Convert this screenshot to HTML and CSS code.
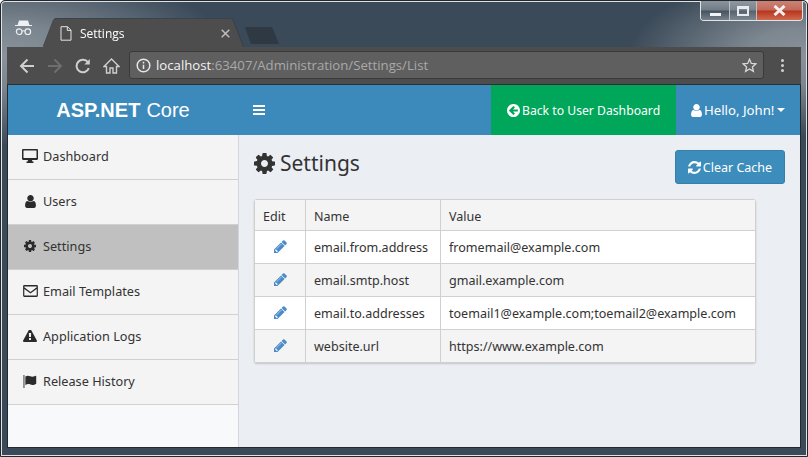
FILE: index.html
```html
<!DOCTYPE html>
<html lang="en">
<head>
<meta charset="utf-8">
<title>Settings</title>
<link rel="stylesheet" href="styles.css">
</head>
<body>
<svg class="defs" aria-hidden="true">
  <symbol id="i-user" viewBox="256 128 1280 1536"><path d="M1536 1399q0 109-62.5 187t-150.5 78h-854q-88 0-150.5-78t-62.5-187q0-85 8.5-160.5t31.5-152 58.5-131 94-89 134.5-34.5q131 128 313 128t313-128q76 0 134.5 34.5t94 89 58.5 131 31.5 152 8.5 160.5zm-256-887q0 159-112.5 271.5t-271.5 112.5-271.5-112.5-112.5-271.5 112.5-271.5 271.5-112.5 271.5 112.5 112.5 271.5z"/></symbol>
  <symbol id="i-cog" viewBox="128 128 1536 1536"><path d="M1152 896q0-106-75-181t-181-75-181 75-75 181 75 181 181 75 181-75 75-181zm512-109v222q0 12-8 23t-20 13l-185 28q-19 54-39 91 35 50 107 138 10 12 10 25t-9 23q-27 37-99 108t-94 71q-12 0-26-9l-138-108q-44 23-91 38-16 136-29 186-7 28-36 28h-222q-14 0-24.5-8.5t-11.5-21.5l-28-184q-49-16-90-37l-141 107q-10 9-25 9-14 0-25-11-126-114-165-168-7-10-7-23 0-12 8-23 15-21 51-66.5t54-70.5q-27-50-41-99l-183-27q-13-2-21-12.5t-8-23.5v-222q0-12 8-23t19-13l186-28q14-46 39-92-40-57-107-138-10-12-10-24 0-10 9-23 26-36 98.5-107.5t94.5-71.5q13 0 26 10l138 107q44-23 91-38 16-136 29-186 7-28 36-28h222q14 0 24.5 8.5t11.5 21.5l28 184q49 16 90 37l142-107q9-9 24-9 13 0 25 10 129 119 165 170 7 8 7 22 0 12-8 23-15 21-51 66.5t-54 70.5q26 50 41 98l183 28q13 2 21 12.5t8 23.5z"/></symbol>
  <symbol id="i-pencil" viewBox="128 128 1536 1536"><path d="M491 1536l91-91-235-235-91 91v107h128v128h107zm523-928q0-22-22-22-10 0-17 7l-542 542q-7 7-7 17 0 22 22 22 10 0 17-7l542-542q7-7 7-17zm-54-192l416 416-832 832h-416v-416zm683 96q0 53-37 90l-166 166-416-416 166-165q36-38 90-38 53 0 91 38l235 234q37 39 37 91z"/></symbol>
  <symbol id="i-refresh" viewBox="128 128 1536 1536"><path d="M1639 1056q0 5-1 7-64 268-268 434.5t-478 166.5q-146 0-282.5-55t-243.5-157l-129 129q-19 19-45 19t-45-19-19-45v-448q0-26 19-45t45-19h448q26 0 45 19t19 45-19 45l-137 137q71 66 161 102t187 36q134 0 250-65t186-179q11-17 53-117 8-23 30-23h192q13 0 22.5 9.5t9.5 22.5zm25-800v448q0 26-19 45t-45 19h-448q-26 0-45-19t-19-45 19-45l138-138q-148-137-349-137-134 0-250 65t-186 179q-11 17-53 117-8 23-30 23h-199q-13 0-22.5-9.5t-9.5-22.5v-7q65-268 270-434.5t480-166.5q146 0 284 55.5t245 156.5l130-129q19-19 45-19t45 19 19 45z"/></symbol>
  <symbol id="i-back" viewBox="128 128 1536 1536"><path d="M1408 960v-128q0-26-19-45t-45-19h-502l189-189q19-19 19-45t-19-45l-91-91q-18-18-45-18t-45 18l-362 362-91 91q-18 18-18 45t18 45l91 91 362 362q18 18 45 18t45-18l91-91q18-18 18-45t-18-45l-189-189h502q26 0 45-19t19-45zm256-64q0 209-103 385.5t-279.5 279.5-385.5 103-385.5-103-279.5-279.5-103-385.5 103-385.5 279.5-279.5 385.5-103 385.5 103 279.5 279.5 103 385.5z"/></symbol>
  <symbol id="i-warn" viewBox="0 128 1792 1536"><path d="M1024 1375v-190q0-14-9.5-23.5t-22.5-9.5h-192q-13 0-22.5 9.5t-9.5 23.5v190q0 14 9.5 23.5t22.5 9.5h192q13 0 22.5-9.5t9.5-23.5zm-2-374l18-459q0-12-10-19-13-11-24-11h-220q-11 0-24 11-10 7-10 21l17 457q0 10 10 16.5t24 6.5h185q14 0 23.5-6.5t10.5-16.5zm-14-934l768 1408q35 63-2 126-17 29-46.5 46t-63.5 17h-1536q-34 0-63.5-17t-46.5-46q-37-63-2-126l768-1408q17-31 47-49t65-18 65 18 47 49z"/></symbol>
  <symbol id="i-desktop" viewBox="0 0 16 14"><path fill-rule="evenodd" d="M1.2 0h13.600c.7 0 1.200.5 1.200 1.200v8.600c0 .7-.5 1.200-1.200 1.200H10l.4 1.600h1.100V14h-7v-1.400h1.100l.4-1.600H1.200C.5 11 0 10.500 0 9.800V1.200C0 .5.500 0 1.200 0zm.3 1.500v7.500h13V1.500z"/></symbol>
  <symbol id="i-mail" viewBox="0 0 16 13"><path fill-rule="evenodd" d="M1.300 0h13.400C15.400 0 16 .6 16 1.300v10.400c0 .7-.6 1.300-1.300 1.300H1.300C.6 13 0 12.400 0 11.700V1.300C0 .6.600 0 1.300 0zM1.300 1.500v1l6.700 5 6.700-5v-1zm0 2.700v7.300h13.400V4.200L8 9.200z"/></symbol>
  <symbol id="i-flag" viewBox="0 0 14 14"><path d="M0 0h1v14H0zM2 1.500c2-1.200 3.800-.8 5.200-.2 1.500.6 3 .7 5.300-.3.800-.3 1.200 0 1.200.6v7.800c-2.500 1.600-4.500 1.500-6.300.8-2-.7-3.300-.6-5.400.5z"/></symbol>
</svg>

<div class="window">
  <div class="titlebar">
    <div class="incognito">
      <svg width="17" height="17" viewBox="0 0 17 17"><path class="ic-fill" d="M4 1.500h9l1.400 4.500H17v1H0V6h2.600z"/><circle class="ic-line" cx="4.200" cy="12.700" r="2.800"/><circle class="ic-line" cx="12.800" cy="12.700" r="2.800"/><path class="ic-line" d="M7 12.200c1-.6 2-.6 3 0"/></svg>
    </div>
    <div class="tab-wrap">
      <div class="tab">
        <svg class="tab-page" width="12" height="15" viewBox="0 0 12 15"><path d="M1 .7h6.500L11 4.200v10H1zM7.300 .7v3.700H11"/></svg>
        <span class="tab-title">Settings</span>
        <svg class="tab-close" width="9" height="9" viewBox="0 0 9 9"><path d="M.7.700l7.600 7.600M8.300.7L.7 8.300"/></svg>
      </div>
    </div>
    <div class="newtab"></div>
    <div class="controls">
      <div class="ctl ctl-min"><span class="min-glyph"></span></div>
      <div class="ctl ctl-max"><span class="max-glyph"></span></div>
      <div class="ctl ctl-close"><svg width="15" height="11" viewBox="0 0 15 11"><path d="M2.500 1l10 9M12.500 1l-10 9"/></svg></div>
    </div>
  </div>

  <div class="toolbar">
    <div class="navs">
      <svg class="nav" width="16" height="16" viewBox="0 0 16 16"><path d="M15 8H2.500M8.500 1.500L2 8l6.500 6.500"/></svg>
      <svg class="nav nav-off" width="16" height="16" viewBox="0 0 16 16"><path d="M1 8h12.500M7.500 1.500L14 8l-6.500 6.500"/></svg>
      <svg class="nav" width="16" height="16" viewBox="0 0 16 16"><path d="M13.800 10.200A6.300 6.300 0 1 1 13 4.300"/><path class="nav-fill" d="M14.800 1v5.500H9.300z"/></svg>
      <svg class="nav nav-home" width="17" height="16" viewBox="0 0 17 16"><path d="M1 8.500L8.500 1 16 8.500h-2.500V15H10v-5H7v5H3.500V8.500z"/></svg>
    </div>
    <div class="omnibox">
      <svg class="info" width="15" height="15" viewBox="0 0 15 15"><circle cx="7.500" cy="7.500" r="6.300"/><path d="M7.500 6.700v4.300M7.500 3.800v1.600"/></svg>
      <span class="url"><span class="url-host">localhost</span>:63407/Administration/Settings/List</span>
      <svg class="star" width="15" height="15" viewBox="0 0 15 15"><path d="M7.500 1.300l1.800 4.200 4.500.4-3.400 3 1 4.400-3.900-2.300-3.900 2.300 1-4.400-3.400-3 4.500-.4z"/></svg>
    </div>
    <div class="dots"><i></i><i></i><i></i></div>
  </div>

  <div class="app">
    <header class="topbar">
      <div class="brand"><b>ASP.NET</b> Core</div>
      <div class="burger"><i></i><i></i><i></i></div>
      <a class="dash-link"><svg class="icon i13"><use href="#i-back"/></svg>Back to User Dashboard</a>
      <a class="user-link"><svg class="icon i-usr"><use href="#i-user"/></svg>Hello, John!<span class="caret"></span></a>
    </header>
    <div class="body">
      <nav class="sidebar">
        <a class="item"><span class="ico"><svg class="i-desk"><use href="#i-desktop"/></svg></span>Dashboard</a>
        <a class="item"><span class="ico"><svg class="i-u"><use href="#i-user"/></svg></span>Users</a>
        <a class="item active"><span class="ico"><svg class="i-c"><use href="#i-cog"/></svg></span>Settings</a>
        <a class="item"><span class="ico"><svg class="i-m"><use href="#i-mail"/></svg></span>Email Templates</a>
        <a class="item"><span class="ico"><svg class="i-w"><use href="#i-warn"/></svg></span>Application Logs</a>
        <a class="item"><span class="ico"><svg class="i-f"><use href="#i-flag"/></svg></span>Release History</a>
      </nav>
      <main class="content">
        <div class="head">
          <h1><svg class="h-cog"><use href="#i-cog"/></svg>Settings</h1>
          <button class="btn"><svg class="icon i13"><use href="#i-refresh"/></svg>Clear Cache</button>
        </div>
        <table class="grid">
          <thead><tr><th class="c-edit">Edit</th><th class="c-name">Name</th><th class="c-val">Value</th></tr></thead>
          <tbody>
            <tr><td class="pen"><svg><use href="#i-pencil"/></svg></td><td>email.from.address</td><td>fromemail@example.com</td></tr>
            <tr><td class="pen"><svg><use href="#i-pencil"/></svg></td><td>email.smtp.host</td><td>gmail.example.com</td></tr>
            <tr><td class="pen"><svg><use href="#i-pencil"/></svg></td><td>email.to.addresses</td><td>toemail1@example.com;toemail2@example.com</td></tr>
            <tr><td class="pen"><svg><use href="#i-pencil"/></svg></td><td>website.url</td><td>https://www.example.com</td></tr>
          </tbody>
        </table>
      </main>
    </div>
  </div>
</div>
</body>
</html>
```

FILE: styles.css
```css
* { box-sizing: border-box; }
html, body { margin: 0; height: 100%; overflow: hidden; }
body { font-family: "Noto Sans", "Open Sans", sans-serif; font-size: 13px; color: #333; }
.defs { display: none; }

.window {
  width: 808px; height: 457px;
  display: flex; flex-direction: column;
  border: 1px solid #23282e;
  border-radius: 5px 5px 0 0;
  box-shadow: inset 0 0 0 1px #dfe3e6;
  padding: 1px;
  background:
    radial-gradient(ellipse 230px 90px at 0 55px, #8a939b 0%, #7b858f 35%, rgba(59,74,89,0) 100%),
    radial-gradient(ellipse 180px 80px at 808px 55px, #8a929a 0%, #7d8790 35%, rgba(59,74,89,0) 100%),
    #3b4a59;
}

/* title bar */
.titlebar { height: 45px; display: flex; align-items: flex-end; position: relative; flex: none; padding-left: 13px; }
.incognito { width: 17px; height: 28px; flex: none; }
.ic-fill { fill: #eef0f2; }
.ic-line { fill: none; stroke: #eef0f2; stroke-width: 1.2; }
.tab-wrap { flex: none; margin-left: 11px; filter: drop-shadow(0 -1px 0 #39434e) drop-shadow(1px 0 0 #39434e); }
.tab {
  width: 200px; height: 28px;
  background: #4d4d4d;
  clip-path: polygon(0 100%, 10px 2px, 12px 0, 188px 0, 190px 2px, 200px 100%);
  display: flex; align-items: center; padding: 0 13px 0 17px;
  font-family: "Open Sans", sans-serif; font-size: 12px; color: #fff;
}
.tab-page { fill: none; stroke: #e4e4e4; stroke-width: 1; margin-right: 8px; }
.tab-title { flex: 1; }
.tab-close { fill: none; stroke: #bdbdbd; stroke-width: 1.500; }
.newtab {
  width: 34px; height: 17px; margin: 0 0 3px 2px; flex: none; background: #2e3944;
  clip-path: polygon(0 0, 27px 0, 34px 100%, 6px 100%);
}
.controls {
  position: absolute; top: -1px; right: 3px; display: flex; height: 20px;
  border: 1px solid #dfe3e6; border-top: 0; border-radius: 0 0 4px 4px; overflow: hidden;
}
.ctl { display: flex; align-items: center; justify-content: center; border-left: 1px solid #b9c0c6; }
.ctl:first-child { border-left: 0; }
.ctl-min { width: 28px; background: linear-gradient(#8a949c 0%, #707b85 48%, #46525e 52%, #76818b 100%); }
.ctl-max { width: 27px; background: linear-gradient(#8f989f 0%, #7a848d 48%, #55616c 52%, #7e8891 100%); }
.ctl-close { width: 46px; background: linear-gradient(#cd8174 0%, #c06a5a 48%, #b7341c 52%, #cf6a4e 100%); }
.min-glyph { width: 11px; height: 3px; margin-top: 7px; background: #f2f3f4; }
.max-glyph { width: 12px; height: 10px; border: 2px solid #e8ebed; border-top-width: 3px; }
.ctl-close svg { fill: none; stroke: #f3efee; stroke-width: 3; }

/* toolbar */
.toolbar {
  height: 38px; flex: none; margin: 0 5px;
  background: #4d4d4d; border-bottom: 1px solid #2f2f2f;
  display: flex; align-items: center; padding: 0 0 0 12px;
}
.navs { display: flex; gap: 12px; width: 110px; flex: none; }
.nav { fill: none; stroke: #cfcfcf; stroke-width: 2; }
.nav-home { stroke-width: 1.400; }
.nav-off { stroke: #6e6e6e; }
.nav-fill { fill: #cfcfcf; stroke: none; }
.omnibox {
  width: 635px; height: 28px; flex: none; margin-top: -1px;
  background: #5f5f5f; border: 1px solid #3a3a3a; border-radius: 3px;
  display: flex; align-items: center; padding: 0 6px 0 6px;
}
.info { fill: none; stroke: #e6e6e6; stroke-width: 1.500; flex: none; margin-right: 5px; }
.url { flex: 1; font-family: "Open Sans", sans-serif; font-size: 13.200px; color: #a9a9a9; white-space: nowrap; }
.url-host { color: #f2f2f2; }
.star { fill: none; stroke: #d8d8d8; stroke-width: 1.300; flex: none; }
.dots { margin-left: 17px; display: flex; flex-direction: column; gap: 2px; }
.dots i { width: 3px; height: 3px; border-radius: 50%; background: #cfcfcf; display: block; }

/* app */
.app {
  flex: 1; min-height: 0; margin: 0 5px 7px;
  border: 1px solid #24292e; border-width: 0 1px 1px;
  display: flex; flex-direction: column; background: #ebeef3;
}
.topbar { height: 50px; flex: none; display: flex; align-items: stretch; background: #3c8abb; color: #fff; }
.brand { width: 230px; flex: none; display: flex; align-items: center; justify-content: center; gap: 6px; font-family: "Liberation Sans", Arial, sans-serif; font-size: 20px; }
.burger { display: flex; flex-direction: column; gap: 2px; margin: 0 auto 0 15px; justify-content: center; }
.burger i { display: block; width: 12px; height: 2px; background: #fff; }
.dash-link, .user-link { display: flex; align-items: center; color: #fff; }
.dash-link { width: 185px; background: #00a65a; padding-left: 16px; font-size: 12.200px; }
.user-link { width: 124px; padding-left: 15px; font-size: 13.200px; }
.icon { fill: #fff; flex: none; }
.i13 { width: 13px; height: 13px; margin-right: 2px; }
.i-usr { width: 11px; height: 13px; margin-right: 2px; }
.caret { width: 0; height: 0; margin-left: 3px; border: 4px solid transparent; border-top-color: #fff; border-bottom: 0; }

.body { flex: 1; min-height: 0; display: flex; }
.sidebar { width: 231px; flex: none; background: #f8f9fb; border-right: 1px solid #d2d6dc; }
.item { height: 45px; display: flex; align-items: center; background: #f4f4f4; border-bottom: 1px solid #d0d0d0; padding-bottom: 2px; color: #333; font-size: 12.700px; }
.item.active { background: #c0c0c0; }
.ico { width: 35px; flex: none; display: flex; justify-content: center; padding-left: 9px; }
.ico svg { fill: #2b2b2b; display: block; }
.i-desk { width: 16px; height: 14px; }
.i-u { width: 11px; height: 13px; }
.i-c { width: 12px; height: 12px; }
.i-m { width: 15px; height: 12px; }
.i-w { width: 14px; height: 12px; }
.i-f { width: 14px; height: 13px; }

.content { flex: 1; min-width: 0; padding: 14px 15px 0 15px; }
.head { display: flex; justify-content: space-between; align-items: flex-start; height: 50px; }
h1 { margin: 0; font-weight: 400; font-size: 21px; line-height: 29px; color: #333; display: flex; align-items: center; }
.h-cog { width: 21px; height: 21px; fill: #333; margin-right: 5px; }
.btn {
  width: 110px; height: 34px; margin-top: 1px; border: 1px solid #367fa9; border-radius: 3px; background: #3c8dbc;
  color: #fff; font: inherit; font-size: 12.500px; display: flex; align-items: center; justify-content: center; padding: 0;
}
.grid {
  width: 502px; border-collapse: separate; border-spacing: 0; table-layout: fixed;
  border: 1px solid #d0d0d0; border-radius: 3px; background: #fff;
  box-shadow: 0 1px 2px rgba(0,0,0,.18);
  font-size: 12.550px;
}
.c-edit { width: 50px; }
.c-name { width: 135px; }
th, td { padding: 0 8px; text-align: left; font-weight: 400; height: 33px; border-top: 1px solid #d0d0d0; border-left: 1px solid #d0d0d0; white-space: nowrap; }
th { height: 30px; background: #f4f4f4; border-top: 0; padding-top: 2px; }
th:first-child, td:first-child { border-left: 0; }
tbody tr:nth-child(even) td { background: #f4f4f4; }
.pen { text-align: center; padding: 0; }
.pen svg { width: 13px; height: 13px; fill: #4b8cc8; display: inline-block; vertical-align: -1px; }
```
